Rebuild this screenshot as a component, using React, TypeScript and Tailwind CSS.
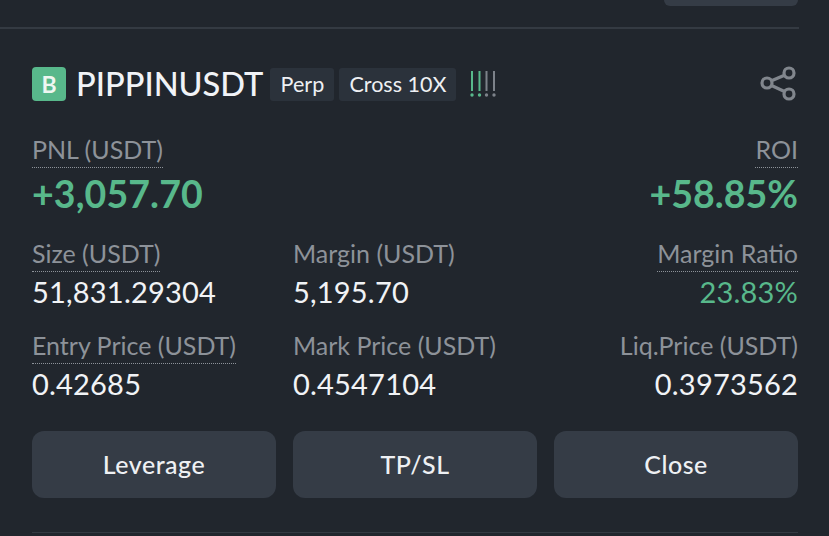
import React from "react";

function Label({ children, dotted }: { children: React.ReactNode; dotted?: boolean }) {
  return (
    <span
      className={
        "inline-block h-[32px] text-[25px] leading-[26px] text-[#8d9299] " +
        (dotted ? "border-b border-dotted border-[#8d9299]" : "")
      }
    >
      {children}
    </span>
  );
}

function Stat({ label, value, dotted, right, green }: { label: string; value: string; dotted?: boolean; right?: boolean; green?: boolean }) {
  return (
    <div className={"flex flex-col " + (right ? "items-end" : "items-start")}>
      <Label dotted={dotted}>{label}</Label>
      <span className={"mt-[3px] h-[34px] text-[29px] leading-[34px] tracking-[0.2px] " + (green ? "text-[#58b88b]" : "text-[#f1f3f6]")}>
        {value}
      </span>
    </div>
  );
}

function Btn({ children }: { children: React.ReactNode }) {
  return (
    <button className="h-[67px] rounded-[12px] bg-[#353c46] text-[25px] font-medium tracking-[0.5px] text-[#eef0f3]">
      {children}
    </button>
  );
}

export default function App() {
  return (
    <div className="h-[536px] w-[829px] overflow-hidden bg-[#21262d] font-['Lato',sans-serif]">
      <div className="w-[799px]">
        <div className="ml-auto mr-[1px] h-[6px] w-[134px] rounded-b-[10px] bg-[#353c46]" />
        <div className="mt-[21px] h-[2px] bg-[#343a42]" />
        <div className="pl-[32px] pr-[1px]">
          <div className="mt-[38px] flex h-[34px] items-center">
            <div className="flex h-[34px] w-[34px] items-center justify-center rounded-[4px] bg-[#58b88b] text-[23px] font-bold text-[#eef6f1]">B</div>
            <span className="ml-[10px] text-[32.6px] font-medium leading-[34px] text-[#f1f3f7]">PIPPINUSDT</span>
            <span className="ml-[7px] flex h-[33px] w-[64px] items-center justify-center rounded-[3px] bg-[#2b323b] text-[21.5px] text-[#eef0f3]">Perp</span>
            <span className="ml-[5px] flex h-[33px] w-[117px] items-center justify-center rounded-[3px] bg-[#2b323b] text-[21.5px] text-[#eef0f3]">Cross 10X</span>
            <svg className="ml-[14px]" width="28" height="28" viewBox="0 0 28 28" aria-hidden="true">
              {[2, 9.5, 16.5, 24].map((x, i) => (
                <g key={x} fill={i < 2 ? "#58b88b" : "#7d828a"}>
                  <rect x={x - 1} y="1" width="2" height="20" />
                  <circle cx={x} cy="25" r="1.7" />
                </g>
              ))}
            </svg>
            <svg className="ml-auto" width="38" height="38" viewBox="0 0 38 38" fill="none" stroke="#81868d" strokeWidth="3.2" aria-hidden="true">
              <circle cx="7" cy="18" r="5" />
              <circle cx="29" cy="8" r="5" />
              <circle cx="29" cy="29" r="5" />
              <path d="M11.5 15.8 L24.5 10.2 M11.5 20.5 L24.5 26.5" />
            </svg>
          </div>

          <div className="mt-[35px] flex justify-between">
            <div className="flex flex-col items-start">
              <Label dotted>PNL (USDT)</Label>
              <span className="mt-[6px] text-[37.5px] font-bold leading-[40px] tracking-[0.1px] text-[#58b88b]">+3,057.70</span>
            </div>
            <div className="flex flex-col items-end">
              <Label dotted>ROI</Label>
              <span className="mt-[6px] text-[37.5px] font-bold leading-[40px] text-[#58b88b]">+58.85%</span>
            </div>
          </div>

          <div className="mt-[26px] grid grid-cols-3 gap-x-[17px] gap-y-[23px]">
            <Stat label="Size (USDT)" value="51,831.29304" dotted />
            <Stat label="Margin (USDT)" value="5,195.70" />
            <Stat label="Margin Ratio" value="23.83%" dotted right green />
            <Stat label="Entry Price (USDT)" value="0.42685" dotted />
            <Stat label="Mark Price (USDT)" value="0.4547104" />
            <Stat label="Liq.Price (USDT)" value="0.3973562" right />
          </div>

          <div className="mt-[30px] grid grid-cols-3 gap-x-[17px]">
            <Btn>Leverage</Btn>
            <Btn>TP/SL</Btn>
            <Btn>Close</Btn>
          </div>

          <div className="mt-[34px] h-[1px] bg-[#343a42]" />
        </div>
      </div>
    </div>
  );
}
